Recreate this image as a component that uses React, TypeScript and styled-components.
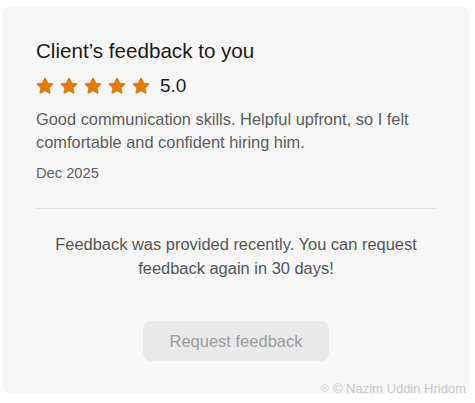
import React from "react";
import styled, { createGlobalStyle } from "styled-components";

const Global = createGlobalStyle`
  html, body { margin: 0; padding: 0; background: #ffffff; }
  body { font-family: "Liberation Sans", Arial, sans-serif; }
  * { box-sizing: border-box; }
`;

const Page = styled.div`
  position: relative;
  width: 475px;
  height: 403px;
  padding: 6px 6px 0 3px;
`;

const Card = styled.section`
  height: 388px;
  background: #f7f7f7;
  border-radius: 8px;
  padding: 32px 33px 0 33px;
  display: flex;
  flex-direction: column;
`;

const Title = styled.h2`
  margin: 0;
  font-size: 20.6px;
  line-height: 26px;
  font-weight: 400;
  color: #1a1a1a;
`;

const RatingRow = styled.div`
  display: flex;
  align-items: center;
  margin-top: 9px;
  height: 26px;
`;

const Stars = styled.div`
  display: flex;
  gap: 6px;
`;

const Score = styled.span`
  margin-left: 10px;
  font-size: 19px;
  color: #1a1a1a;
`;

const Comment = styled.p`
  margin: 9px 0 0;
  font-size: 16.4px;
  line-height: 23px;
  color: #5c5c5c;
`;

const DateText = styled.div`
  margin-top: 9px;
  font-size: 14.7px;
  line-height: 20px;
  color: #616161;
`;

const Divider = styled.hr`
  margin: 25px 0 0;
  border: 0;
  border-top: 1px solid #e6e6e6;
`;

const Notice = styled.p`
  margin: 23px 0 0;
  text-align: center;
  font-size: 16.45px;
  line-height: 24px;
  color: #555555;
`;

const ButtonRow = styled.div`
  display: flex;
  justify-content: center;
  margin-top: 41px;
`;

const RequestButton = styled.button`
  width: 186px;
  height: 40px;
  border: 0;
  border-radius: 8px;
  background: #e9e9e9;
  color: #9d9d9d;
  font-family: inherit;
  font-size: 16.5px;
  cursor: not-allowed;
`;

const Watermark = styled.div`
  position: absolute;
  right: 9px;
  bottom: 7px;
  display: flex;
  align-items: center;
  gap: 3px;
  font-size: 13px;
  color: #c9c9c9;
`;

const Star = () => (
  <svg width="18" height="18" viewBox="0 0 24 24">
    <path
      d="M12 2.2l3 6.3 6.9.9-5.1 4.7 1.4 6.8L12 17.5l-6.2 3.4 1.4-6.8-5.1-4.7 6.9-.9z"
      fill="#e07b12"
      stroke="#e07b12"
      strokeWidth="2.4"
      strokeLinejoin="round"
    />
  </svg>
);

export default function App() {
  return (
    <Page>
      <Global />
      <Card>
        <Title>Client’s feedback to you</Title>
        <RatingRow>
          <Stars>
            {[0, 1, 2, 3, 4].map((i) => (
              <Star key={i} />
            ))}
          </Stars>
          <Score>5.0</Score>
        </RatingRow>
        <Comment>
          Good communication skills. Helpful upfront, so I felt comfortable and confident hiring him.
        </Comment>
        <DateText>Dec 2025</DateText>
        <Divider />
        <Notice>
          Feedback was provided recently. You can request
          <br />
          feedback again in 30 days!
        </Notice>
        <ButtonRow>
          <RequestButton disabled>Request feedback</RequestButton>
        </ButtonRow>
      </Card>
      <Watermark>
        <svg width="11" height="11" viewBox="0 0 12 12">
          <path d="M6 1l4.5 4.5L6 10 1.5 5.5z" fill="none" stroke="#cfcfcf" strokeWidth="1" />
          <circle cx="6" cy="5.5" r="1.3" fill="none" stroke="#cfcfcf" strokeWidth="0.9" />
        </svg>
        <span>© Nazim Uddin Hridom</span>
      </Watermark>
    </Page>
  );
}
